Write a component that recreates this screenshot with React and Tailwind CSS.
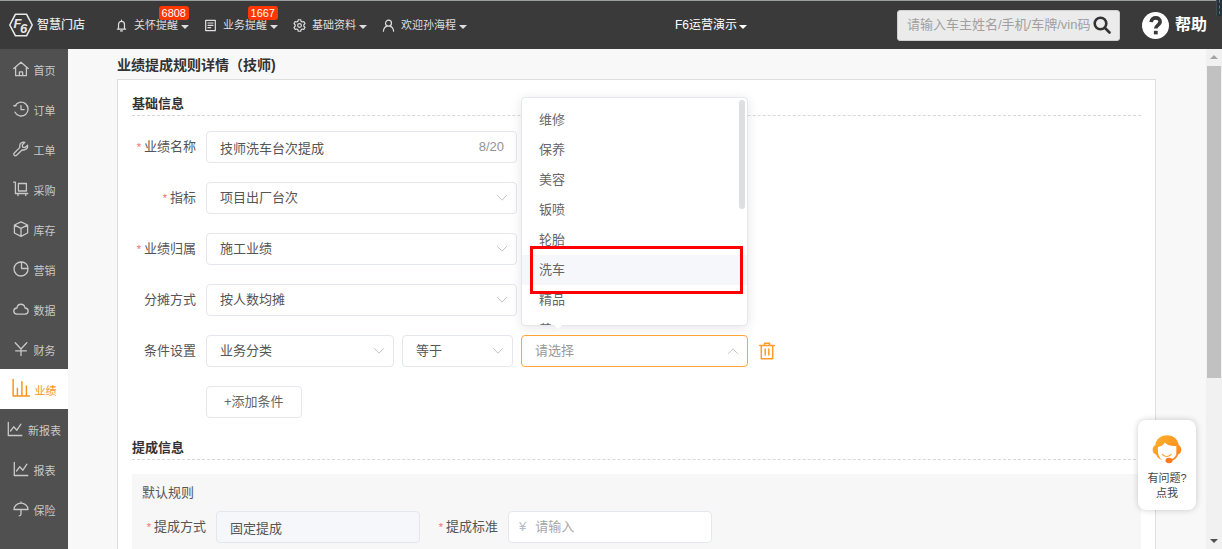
import { useState } from "react";

const strokeProps = {
    fill: "none",
    stroke: "currentColor",
    strokeLinecap: "round",
    strokeLinejoin: "round",
    "aria-hidden": true,
};

const sideIcons = {
    home: <path d="M.8 7.6 8 1.2l7.2 6.4M2.6 6.5v8.2h10.8V6.5M6.4 14.5v-3.6h3.2v3.6" />,
    order: <path d="M.8 4.6h2.4M1.9 5.2A6.9 6.9 0 1 1 2 11.2M8 4.6v4h3.2" />,
    wrench: <path d="M14.6 4.2 12 6.6l-2.4-.4-.3-2.4L11.8 1.3C9.600.6 6.600 2 6.700 5c0 .6.1 1 .2 1.400L1.300 12c-.7.7-.7 1.700 0 2.300.700.7 1.700.6 2.300 0l5.700-5.500c3 .8 6-1.200 5.300-4.600Z" />,
    cart: <path d="M.6 1.200h1.800v11.300h12.400M5.400 2.500h8v7.500h-8ZM5 12.800v1.800M12.800 12.800v1.800" />,
    box: <path d="M8 .8 14.6 4v8L8 15.300 1.400 12V4ZM1.600 4.200 8 7.400l6.400-3.200M8 7.400v7.700" />,
    pie: <path d="M8.500 1A7 7 0 1 0 15 7.500V7A6.300 6.300 0 0 0 8.500 1ZM8.500 1v6.500H15" />,
    cloud: <path d="M4 13.200c-4.300-.3-4.300-6 0-6.200C4.600 2 11.200 2 12 7c4.200.2 4.200 5.900 0 6.200Z" />,
    yen: <path d="M2.200 1.800 8 8l5.800-6.200M8 8v6.500M2.600 9.800h10.800" />,
    bars: <path d="M1 0v15.200h14.500M4.800 14.500V8.200M8.800 14.500V2.500M12.800 14.500V6.200" />,
    line: <path d="M1.300 1.500v13h13.500M3.500 10l3.200-4.200 3.200 3.400 4-6" />,
    umbrella: <path d="M1 8.500a7 6.300 0 0 1 14 0ZM8 1v1M8 8.500v4.800c0 1.200-.6 1.500-1.800 1.500" />,
};

const menu = [
    { label: "首页", icon: "home" },
    { label: "订单", icon: "order" },
    { label: "工单", icon: "wrench" },
    { label: "采购", icon: "cart" },
    { label: "库存", icon: "box" },
    { label: "营销", icon: "pie" },
    { label: "数据", icon: "cloud" },
    { label: "财务", icon: "yen" },
    { label: "业绩", icon: "bars", active: true },
    { label: "新报表", icon: "line" },
    { label: "报表", icon: "line" },
    { label: "保险", icon: "umbrella" },
];

const categories = ["维修", "保养", "美容", "钣喷", "轮胎", "洗车", "精品", "养护"];

const navItems = [
    {
        label: "关怀提醒",
        badge: "6808",
        icon: <path d="M2.500 10.800h9M3.800 10.600V5.800a3.200 3.200 0 0 1 6.400 0v4.800M7 1.200v1.200M6 12.800h2" />,
    },
    {
        label: "业务提醒",
        badge: "1667",
        icon: <path d="M1.800 1.500h10.400v11H1.800ZM4.300 4.300h5.400M4.300 6.800h5.400M4.300 9.300h3" />,
    },
    {
        label: "基础资料",
        icon: (
            <>
                <path d="m5.700.8-.4 1.700-1.200.7-1.700-.5L1.100 5l1.200 1.200v1.600L1.100 9l1.300 2.300 1.700-.5 1.200.7.4 1.700h2.600l.4-1.700 1.200-.7 1.700.5L12.900 9l-1.200-1.200V6.200L12.900 5l-1.300-2.300-1.700.5-1.200-.7-.4-1.700Z" />
                <circle cx="7" cy="7" r="2" />
            </>
        ),
    },
    {
        label: "欢迎孙海程",
        icon: (
            <>
                <circle cx="7" cy="4.500" r="3.200" />
                <path d="M1.500 13.200c.3-3.400 2-5 3.900-5.600M12.500 13.200c-.3-3.400-2-5-3.900-5.600" />
            </>
        ),
    },
];

function Caret() {
    return (
        <svg viewBox="0 0 8 4" className="w-2 h-1 mt-1" fill="currentColor" aria-hidden="true">
            <path d="M0 0h8L4 4Z" />
        </svg>
    );
}

function Logo() {
    return (
        <a href="#" className="flex items-center gap-1 w-[106px] text-[#e8e8e8]">
            <svg viewBox="0 0 24 24" className="w-6 h-6" aria-hidden="true">
                <path d="M6.500 1.200h11L23.200 12l-5.700 10.800h-11L.8 12Z" fill="none" stroke="currentColor" strokeWidth="1.600" strokeLinejoin="round" />
                <g fill="currentColor" fontFamily="Liberation Sans, sans-serif" fontStyle="italic" fontWeight="bold">
                    <text x="4.500" y="14.500" fontSize="13">F</text>
                    <text x="11" y="19.500" fontSize="13">6</text>
                </g>
            </svg>
            <span className="text-[12px] font-medium">智慧门店</span>
        </a>
    );
}

function Header() {
    return (
        <header className="flex items-center h-[49px] shrink-0 pl-[9px] pr-[15px] bg-[#3a3a3a] border-t border-[#9a9f9d] text-[#dedede] whitespace-nowrap">
            <Logo />
            <nav className="flex items-center gap-[15px]">
                {navItems.map((item) => (
                    <button key={item.label} className="relative flex items-center text-[11px] cursor-pointer">
                        <svg viewBox="0 0 14 14" className="w-[13px] h-[13px] mr-[6px]" strokeWidth="1.300" {...strokeProps}>
                            {item.icon}
                        </svg>
                        {item.label}
                        <span className="ml-[3px]"><Caret /></span>
                        {item.badge && (
                            <span className="absolute right-0 -top-[11px] px-[3px] rounded-[3px] bg-[#ff3600] text-white text-[11px] leading-[14px]">
                                {item.badge}
                            </span>
                        )}
                    </button>
                ))}
            </nav>
            <button className="flex items-center gap-[2px] ml-auto mr-[150px] text-[12px] text-white cursor-pointer">
                F6运营演示
                <Caret />
            </button>
            <form className="flex items-center w-[223px] h-[31px] pl-[9px] pr-2 rounded-[3px] bg-[#ebebeb] border border-[#d0d0d0]" onSubmit={(e) => e.preventDefault()}>
                <input
                    type="text"
                    aria-label="搜索"
                    placeholder="请输入车主姓名/手机/车牌/vin码"
                    className="flex-1 min-w-0 text-[13px] text-gray-700 placeholder:text-[#a0a0a0] outline-none"
                />
                <button aria-label="搜索" className="text-[#333] cursor-pointer">
                    <svg viewBox="0 0 18 18" className="w-[18px] h-[18px]" strokeWidth="2.600" {...strokeProps}>
                        <circle cx="7.500" cy="7.500" r="5.800" />
                        <path d="m12 12 4.500 4.500" />
                    </svg>
                </button>
            </form>
            <a href="#" className="flex items-center gap-[6px] ml-[22px] text-[16px] font-bold text-white">
                <svg viewBox="0 0 28 28" className="w-[27px] h-[27px]" aria-hidden="true">
                    <circle cx="14" cy="14" r="14" fill="#fff" />
                    <path d="M9.500 10.500c.2-6 9.500-5.700 9.300-.3-.1 3.500-4.500 3.300-4.500 7" fill="none" stroke="#3a3a3a" strokeWidth="3.800" />
                    <path d="M12.300 19.500h4v3.700h-4z" fill="#3a3a3a" />
                </svg>
                帮助
            </a>
        </header>
    );
}

function Sidebar() {
    return (
        <nav className="w-[68px] shrink-0 bg-[#505050] text-[#c8c8c8]">
            {menu.map((item) => (
                <a
                    key={item.label}
                    href="#"
                    className={
                        item.active
                            ? "flex items-end justify-center gap-[5px] h-10 pb-3 bg-white text-[#f7931e] text-[11px] leading-[11px]"
                            : "flex items-end justify-center gap-[5px] h-10 pb-3 text-[11px] leading-[11px]"
                    }
                >
                    <svg viewBox="0 0 16 16" className={item.active ? "w-[18px] h-[18px]" : "w-4 h-4"} strokeWidth="1.300" {...strokeProps}>
                        {sideIcons[item.icon]}
                    </svg>
                    {item.label}
                </a>
            ))}
        </nav>
    );
}

function Label({ htmlFor, required, children }) {
    return (
        <label htmlFor={htmlFor} className="w-16 shrink-0 mr-[10px] text-right text-[13px] text-[#555]">
            {required && <span className="mr-[3px] text-[11px] text-[#f56c6c]">*</span>}
            {children}
        </label>
    );
}

function Chevron({ up }) {
    return (
        <svg viewBox="0 0 10 6" className="absolute right-[10px] top-[13px] w-[10px] h-[6px] text-[#c0c4cc] pointer-events-none" {...strokeProps}>
            <path d={up ? "M.5 5.500 5 .8l4.500 4.700" : "M.5.5 5 5.200 9.500.5"} />
        </svg>
    );
}

function Select({ id, value, label }) {
    return (
        <div className="relative w-full">
            <select
                id={id}
                aria-label={label}
                defaultValue={value}
                className="block appearance-none w-full h-8 px-[13px] rounded-[4px] border border-[#e4e7ed] bg-white text-[13px] text-[#555] outline-none"
            >
                <option>{value}</option>
            </select>
            <Chevron />
        </div>
    );
}

function CategoryPicker() {
    const [highlighted, setHighlighted] = useState("洗车");

    return (
        <div className="relative w-[227px] shrink-0">
            <select
                aria-label="分类"
                className="block appearance-none w-full h-8 px-[13px] rounded-[4px] border border-[#ffa53a] bg-white text-[13px] text-[#999] outline-none"
            >
                <option>请选择</option>
            </select>
            <Chevron up />
            <div className="absolute left-0 bottom-full mb-[9px] w-full h-[229px] rounded-[4px] border border-[#e4e7ed] bg-white shadow-[0_2px_12px_rgba(0,0,0,0.1)]">
                <ul role="listbox" aria-label="业务分类选项" className="h-full pt-[7px] overflow-hidden">
                    {categories.map((name) => (
                        <li
                            key={name}
                            role="option"
                            aria-selected={name === highlighted}
                            onMouseEnter={() => setHighlighted(name)}
                            className={
                                name === highlighted
                                    ? "h-[30px] px-[17px] text-[13px] leading-[30px] text-[#666] bg-[#f5f7fa]"
                                    : "h-[30px] px-[17px] text-[13px] leading-[30px] text-[#666]"
                            }
                        >
                            {name}
                        </li>
                    ))}
                </ul>
                <div className="absolute right-[2px] top-[2px] w-[6px] h-[109px] rounded-full bg-[#dedfe1]" />
                <svg viewBox="0 0 12 6" className="absolute left-[30px] top-[225px] w-3 h-[6px]" aria-hidden="true">
                    <path d="M0 0h12L6 6Z" fill="#fff" />
                </svg>
                {/* callout around the option to pick */}
                <div className="absolute left-2 right-1 top-[148px] h-12 border-[3px] border-[#fe0000] pointer-events-none" />
            </div>
        </div>
    );
}

function SectionTitle({ children }) {
    return (
        <h2 className="pb-px border-b border-dashed border-[#d8d8d8] text-[13px] leading-5 font-bold text-[#333]">
            {children}
        </h2>
    );
}

function RuleForm() {
    return (
        <div className="flex flex-col gap-[19px] mt-[15px] mb-5">
            <div className="flex items-center">
                <Label htmlFor="name" required>业绩名称</Label>
                <div className="relative w-[311px]">
                    <input
                        id="name"
                        type="text"
                        maxLength={20}
                        defaultValue="技师洗车台次提成"
                        className="block w-full h-8 pl-[13px] pr-12 rounded-[4px] border border-[#e4e7ed] text-[13px] text-[#555] outline-none"
                    />
                    <span className="absolute right-[13px] top-0 text-[13px] leading-8 text-[#909399]">8/20</span>
                </div>
            </div>
            <div className="flex items-center">
                <Label htmlFor="target" required>指标</Label>
                <div className="w-[311px]"><Select id="target" value="项目出厂台次" /></div>
            </div>
            <div className="flex items-center">
                <Label htmlFor="owner" required>业绩归属</Label>
                <div className="w-[311px]"><Select id="owner" value="施工业绩" /></div>
            </div>
            <div className="flex items-center">
                <Label htmlFor="share">分摊方式</Label>
                <div className="w-[311px]"><Select id="share" value="按人数均摊" /></div>
            </div>
            <div className="flex items-center">
                <Label htmlFor="field">条件设置</Label>
                <div className="flex items-center gap-2">
                    <div className="w-[188px]"><Select id="field" value="业务分类" /></div>
                    <div className="w-[111px]"><Select label="运算符" value="等于" /></div>
                    <CategoryPicker />
                    <button aria-label="删除条件" className="ml-[3px] text-[#ff9c2a] cursor-pointer">
                        <svg viewBox="0 0 16 18" className="w-4 h-[18px]" strokeWidth="1.500" {...strokeProps}>
                            <path d="M.8 3.500h14.400M2.300 3.500v13.200h11.400V3.500M5.500 3.300V1.200h5v2.100M6.200 7v6M9.800 7v6" />
                        </svg>
                    </button>
                </div>
            </div>
            <div className="flex pl-[74px]">
                <button className="h-8 px-[17px] rounded-[4px] border border-[#e4e7ed] bg-white text-[13px] text-[#666] cursor-pointer">
                    +添加条件
                </button>
            </div>
        </div>
    );
}

function CommissionForm() {
    return (
        <div className="mt-[14px] pl-[10px] pt-[9px] pb-10 bg-[#f7f7f7]">
            <h3 className="text-[13px] leading-5 text-[#555]">默认规则</h3>
            <div className="flex items-center mt-2">
                <Label htmlFor="mode" required>提成方式</Label>
                <input
                    id="mode"
                    type="text"
                    disabled
                    defaultValue="固定提成"
                    className="w-[204px] h-8 px-[13px] mr-[14px] rounded-[4px] border border-[#e4e7ed] bg-[#f5f7fa] text-[13px] text-[#555]"
                />
                <Label htmlFor="rate" required>提成标准</Label>
                <div className="flex items-center gap-[9px] w-[204px] h-8 pl-[10px] rounded-[4px] border border-[#e4e7ed] bg-white text-[13px]">
                    <span className="text-[#b4bccc]">¥</span>
                    <input id="rate" type="text" placeholder="请输入" className="flex-1 min-w-0 text-[#555] placeholder:text-[#a8a8a8] outline-none" />
                </div>
            </div>
        </div>
    );
}

function PageScrollbar() {
    return (
        <div className="flex flex-col items-center w-4 shrink-0 py-[6px] bg-[#f1f1f1]">
            <svg viewBox="0 0 8 4" className="w-2 h-1 mb-[7px] text-[#a3a3a3]" fill="currentColor" aria-hidden="true">
                <path d="M0 4h8L4 0Z" />
            </svg>
            <div className="w-[14px] h-[64%] bg-[#c1c1c1]" />
            <svg viewBox="0 0 8 4" className="w-2 h-1 mt-auto text-[#505050]" fill="currentColor" aria-hidden="true">
                <path d="M0 0h8L4 4Z" />
            </svg>
        </div>
    );
}

function HelpWidget() {
    return (
        <button className="absolute right-[26px] bottom-[39px] flex flex-col items-center w-[58px] h-[90px] pt-[14px] rounded-lg bg-white shadow-[0_0_6px_rgba(0,0,0,0.2)] text-[11px] leading-[15px] text-[#444] cursor-pointer">
            <svg viewBox="0 0 30 30" className="w-[30px] h-[30px] mb-[7px]" aria-hidden="true">
                <defs>
                    <linearGradient id="hair" x1="0" y1="0" x2="1" y2="1">
                        <stop offset="0" stopColor="#ffb52b" />
                        <stop offset="1" stopColor="#ff7e1d" />
                    </linearGradient>
                </defs>
                <path d="M3.300 11C5-2 25-2 26.700 11c3.500 1.500 3.500 8.500-.5 9.500-1.500 4-4.200 6-7.200 6.300v-1.500c2.300-.5 4-1.800 5.300-5V12c-5 .5-9-.8-11.500-3.500-1.500 2.500-3.500 3.800-6.800 4.500-.5 6 .5 10 4 13C6.500 25 4.800 22.500 4 20.500c-4.500-1-4.200-8-.7-9.500Z" fill="url(#hair)" />
                <ellipse cx="17" cy="26.500" rx="3.500" ry="2.700" fill="#ff7a1a" />
                <path d="M10.500 20.500c2.500 2.500 6 2.500 8.500 0" fill="none" stroke="#ffa53a" strokeWidth="1.200" strokeLinecap="round" />
            </svg>
            <span>有问题?</span>
            <span>点我</span>
        </button>
    );
}

export default function App() {
    return (
        <div className="relative flex flex-col h-screen overflow-hidden bg-[#f8f8f8] font-['Liberation_Sans','Noto_Sans_CJK_SC',sans-serif]">
            <Header />
            <div className="flex flex-1 min-h-0">
                <Sidebar />
                <main className="flex-1 min-w-0 overflow-hidden pt-[6px] pl-[49px] pr-[50px]">
                    <h1 className="mb-1 text-[14px] leading-5 font-bold text-[#333]">业绩提成规则详情（技师)</h1>
                    <div className="px-[14px] pt-[14px] pb-6 bg-white border border-[#dedede]">
                        <SectionTitle>基础信息</SectionTitle>
                        <RuleForm />
                        <SectionTitle>提成信息</SectionTitle>
                        <CommissionForm />
                    </div>
                </main>
                <PageScrollbar />
            </div>
            <HelpWidget />
            <div className="absolute right-0 top-0 w-[6px] h-4 bg-[#26323a] border-l border-[#3f4a50]">
                <div className="ml-[2px] w-px h-[14px] border-l border-dashed border-[#2a86a8]" />
            </div>
        </div>
    );
}
